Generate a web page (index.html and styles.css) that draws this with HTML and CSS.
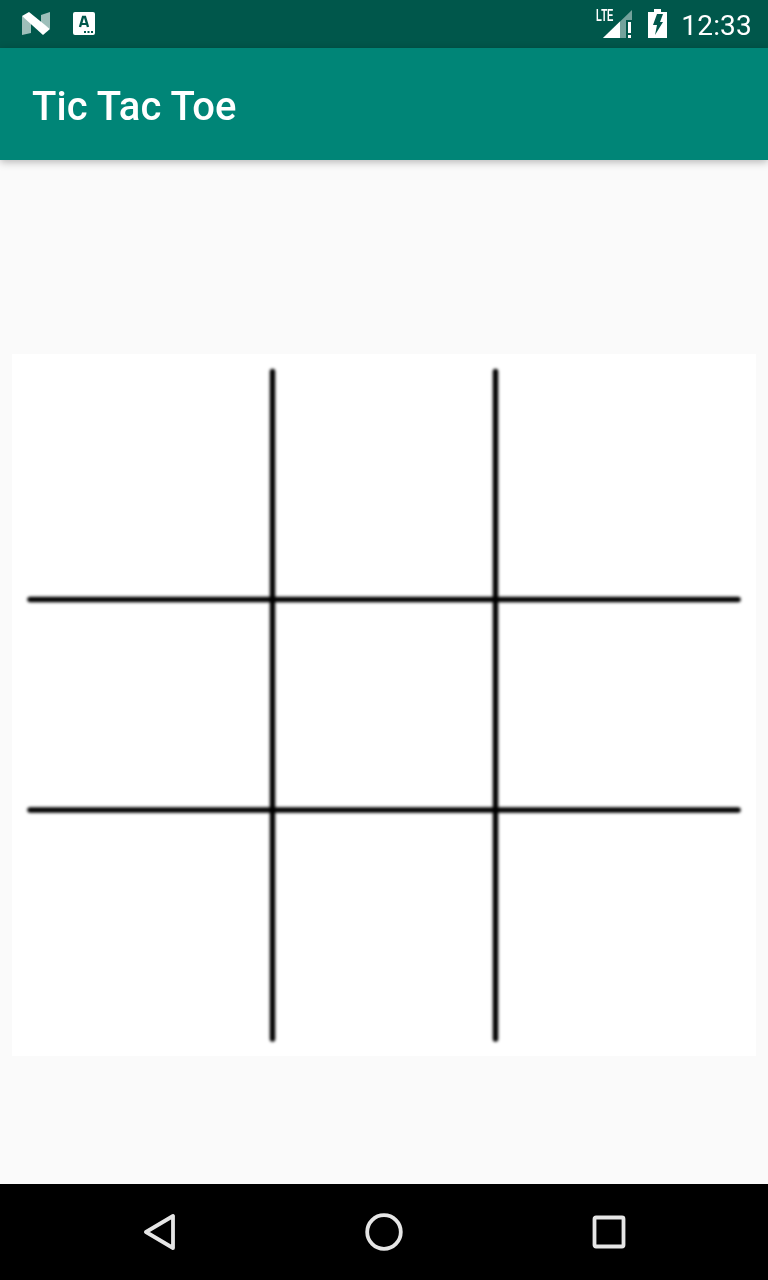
FILE: index.html
```html
<!DOCTYPE html>
<html lang="en">
<head>
<meta charset="utf-8">
<title>Tic Tac Toe</title>
<link rel="stylesheet" href="styles.css">
</head>
<body>
<div class="screen">
  <header class="status-bar">
    <div class="status-left">
      <svg class="icon-n" width="28" height="24" viewBox="0 0 28 24" aria-hidden="true">
        <path d="M0 4 L9 9.5 V21 L0 23 Z" fill="#fff" fill-opacity=".62"/>
        <path d="M19 3 L28 0 V17 L19 11 Z" fill="#fff" fill-opacity=".62"/>
        <path d="M0 4 L7 0 L28 17 L21 23 Z" fill="#fff"/>
      </svg>
      <svg class="icon-a" width="22" height="24" viewBox="0 0 22 24" aria-hidden="true">
        <rect width="22" height="23" rx="2" fill="#fff"/>
        <path d="M7 15 L10 5 H12 L15 15" fill="none" stroke="#00574b" stroke-width="2.4"/>
        <path d="M8 12 H14" stroke="#00574b" stroke-width="2"/>
        <path d="M11 19 h2 v2 h-2z M14.5 19 h2 v2 h-2z M18 19 h2 v2 h-2z" fill="#00574b"/>
      </svg>
    </div>
    <div class="status-right">
      <div class="signal">
        <span class="lte">LTE</span>
        <svg width="30" height="30" viewBox="0 0 30 30" aria-hidden="true">
          <path d="M0 29 L29 1 V11 H23 V29 Z" fill="#fff" fill-opacity=".45"/>
          <path d="M0 29 L17 12.5 V29 Z" fill="#fff"/>
          <path d="M25 13 h3 v11 h-3z M25 26 h3 v3 h-3z" fill="#fff"/>
        </svg>
      </div>
      <svg class="battery" width="20" height="30" viewBox="0 0 20 30" aria-hidden="true">
        <path d="M6 0 H13 V3 H19 V29 H0 V3 H6 Z" fill="#fff"/>
        <path d="M9 5 H15 L12 13 H15 L7 26 L9 16 H5 Z" fill="#00574b"/>
      </svg>
      <span class="clock">12:33</span>
    </div>
  </header>
  <div class="app-bar">
    <h1 class="app-title">Tic Tac Toe</h1>
  </div>
  <main class="content">
    <svg class="board" viewBox="0 0 744 702" aria-label="Tic tac toe board">
      <defs>
        <filter id="soft" x="-5%" y="-5%" width="110%" height="110%">
          <feGaussianBlur stdDeviation="1.4"/>
        </filter>
      </defs>
      <g class="grid-lines" filter="url(#soft)">
        <path d="M260.5 17.5 V685"/>
        <path d="M483.5 17.5 V685"/>
        <path d="M18 245.5 H726"/>
        <path d="M18 456 H726"/>
      </g>
    </svg>
  </main>
  <nav class="nav-bar">
    <svg class="nav-icon" width="32" height="38" viewBox="0 0 32 38" aria-hidden="true">
      <path class="nav-stroke" d="M2 19 L29 3 V35 Z"/>
    </svg>
    <svg class="nav-icon" width="38" height="38" viewBox="0 0 38 38" aria-hidden="true">
      <circle class="nav-stroke" cx="19" cy="19" r="16.8"/>
    </svg>
    <svg class="nav-icon" width="34" height="34" viewBox="0 0 34 34" aria-hidden="true">
      <rect class="nav-stroke" x="2.5" y="2.5" width="29" height="29" rx="1.5"/>
    </svg>
  </nav>
</div>
</body>
</html>
```

FILE: styles.css
```css
* { box-sizing: border-box; }

html, body {
  margin: 0;
  padding: 0;
  height: 100%;
}

body {
  font-family: Roboto, "Liberation Sans", sans-serif;
  background: #fafafa;
}

.screen {
  width: 768px;
  height: 1280px;
  display: flex;
  flex-direction: column;
  overflow: hidden;
}

.status-bar {
  height: 48px;
  flex: none;
  background: #00574b;
  display: flex;
  align-items: center;
  justify-content: space-between;
  padding: 0 16px 0 22px;
}

.status-left {
  display: flex;
  align-items: center;
  gap: 23px;
  filter: blur(.35px);
}

.status-right {
  display: flex;
  align-items: center;
}

.signal {
  position: relative;
  width: 30px;
  height: 30px;
  margin-right: 15px;
  filter: blur(.35px);
}

.signal svg { display: block; }

.lte {
  position: absolute;
  left: -7px;
  top: 0;
  font-family: "Liberation Sans", sans-serif;
  font-size: 16px;
  line-height: 13px;
  font-weight: 700;
  color: #fff;
  transform: scaleX(.6);
  transform-origin: left top;
}

.battery {
  display: block;
  margin-right: 13px;
  filter: blur(.35px);
}

.clock {
  color: #fff;
  font-size: 28px;
  line-height: 48px;
  letter-spacing: .2px;
  padding-top: 4px;
  filter: blur(.3px);
}

.app-bar {
  height: 112px;
  flex: none;
  background: #008577;
  display: flex;
  align-items: center;
  padding: 0 32px;
  position: relative;
  box-shadow: 0 2px 8px rgba(0, 0, 0, .28);
}

.app-title {
  margin: 0;
  padding-top: 6px;
  color: #fff;
  font-size: 40px;
  font-weight: 500;
  line-height: 1;
  letter-spacing: .1px;
  filter: blur(.4px);
}

.content {
  flex: 1;
  display: flex;
  align-items: flex-start;
  justify-content: center;
  padding: 194px 12px 0;
}

.board {
  display: block;
  width: 744px;
  height: 702px;
  background: #fff;
}

.grid-lines path {
  fill: none;
  stroke: #000;
  stroke-width: 5.5;
  stroke-linecap: round;
}

.nav-bar {
  height: 96px;
  flex: none;
  background: #000;
  display: flex;
  align-items: center;
  padding: 0 142px 0 144px;
  justify-content: space-between;
}

.nav-icon { filter: blur(.5px); }

.nav-stroke {
  fill: none;
  stroke: #e6e6e6;
  stroke-width: 3.8;
  stroke-linejoin: round;
}
```
